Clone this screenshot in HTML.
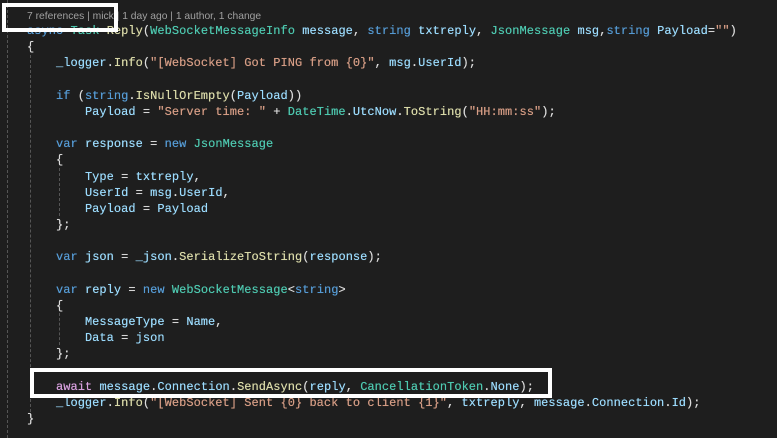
<!DOCTYPE html>
<html><head><meta charset="utf-8"><style>
html,body{margin:0;padding:0;background:#1e1e1e;width:777px;height:438px;overflow:hidden;position:relative}
.code{position:absolute;left:27px;top:23px;font-family:"Liberation Mono",monospace;font-size:12px;line-height:16.17px;color:#dcdcdc;white-space:pre;letter-spacing:0.04px;text-shadow:0 0 0.4px currentColor}
.k{color:#569cd6}.t{color:#4ec9b0}.v{color:#9cdcfe}.m{color:#dcdcaa}.s{color:#d69d85}.a{color:#d8a0df}
.lens{position:absolute;left:27px;top:11px;font-family:"Liberation Sans",sans-serif;font-size:10.3px;color:#a0a0a0;white-space:pre}
.g{position:absolute;width:0;border-left:1px dashed #555}
.box{position:absolute;border:4px solid #fff;box-sizing:border-box}
</style></head><body>
<div class="g" style="left:7px;top:0;height:438px"></div>
<div class="g" style="left:30px;top:55px;height:362px"></div>
<div class="g" style="left:59px;top:168px;height:48px"></div>
<div class="g" style="left:59px;top:313px;height:32px"></div>
<div class="lens">7 references | mick | 1 day ago | 1 author, 1 change</div>
<div class="code"><span class="k">async</span> <span class="t">Task</span> <span class="m">Reply</span>(<span class="t">WebSocketMessageInfo</span> <span class="v">message</span>, <span class="k">string</span> <span class="v">txtreply</span>, <span class="t">JsonMessage</span> <span class="v">msg</span>,<span class="k">string</span> <span class="v">Payload</span>=<span class="s">""</span>)
{
    <span class="v">_logger</span>.<span class="m">Info</span>(<span class="s">"[WebSocket] Got PING from {0}"</span>, <span class="v">msg</span>.<span class="v">UserId</span>);

    <span class="k">if</span> (<span class="k">string</span>.<span class="m">IsNullOrEmpty</span>(<span class="v">Payload</span>))
        <span class="v">Payload</span> = <span class="s">"Server time: "</span> + <span class="t">DateTime</span>.<span class="v">UtcNow</span>.<span class="m">ToString</span>(<span class="s">"HH:mm:ss"</span>);

    <span class="k">var</span> <span class="v">response</span> = <span class="k">new</span> <span class="t">JsonMessage</span>
    {
        <span class="v">Type</span> = <span class="v">txtreply</span>,
        <span class="v">UserId</span> = <span class="v">msg</span>.<span class="v">UserId</span>,
        <span class="v">Payload</span> = <span class="v">Payload</span>
    };

    <span class="k">var</span> <span class="v">json</span> = <span class="v">_json</span>.<span class="m">SerializeToString</span>(<span class="v">response</span>);

    <span class="k">var</span> <span class="v">reply</span> = <span class="k">new</span> <span class="t">WebSocketMessage</span>&lt;<span class="k">string</span>&gt;
    {
        <span class="v">MessageType</span> = <span class="v">Name</span>,
        <span class="v">Data</span> = <span class="v">json</span>
    };

    <span class="a">await</span> <span class="v">message</span>.<span class="v">Connection</span>.<span class="m">SendAsync</span>(<span class="v">reply</span>, <span class="t">CancellationToken</span>.<span class="v">None</span>);
    <span class="v">_logger</span>.<span class="m">Info</span>(<span class="s">"[WebSocket] Sent {0} back to client {1}"</span>, <span class="v">txtreply</span>, <span class="v">message</span>.<span class="v">Connection</span>.<span class="v">Id</span>);
}</div>
<div class="box" style="left:2px;top:3px;width:116px;height:29px"></div>
<div class="box" style="left:30px;top:368px;width:522px;height:30px"></div>
</body></html>
